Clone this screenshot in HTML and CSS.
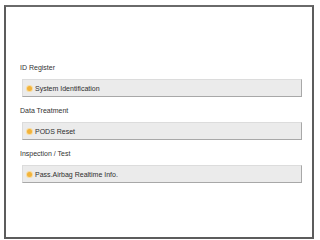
FILE: index.html
```html
<!DOCTYPE html>
<html>
<head>
<meta charset="utf-8">
<link rel="stylesheet" href="styles.css">
</head>
<body>
<div class="frame">
  <div class="group">
    <div class="label">ID Register</div>
    <div class="btn"><span class="dot"></span><span class="btn-text">System Identification</span></div>
  </div>
  <div class="group">
    <div class="label">Data Treatment</div>
    <div class="btn"><span class="dot"></span><span class="btn-text">PODS Reset</span></div>
  </div>
  <div class="group">
    <div class="label">Inspection / Test</div>
    <div class="btn"><span class="dot"></span><span class="btn-text">Pass.Airbag Realtime Info.</span></div>
  </div>
</div>
</body>
</html>
```

FILE: styles.css
```css
html, body {
  margin: 0;
  padding: 0;
  background: #ffffff;
  width: 317px;
  height: 240px;
  overflow: hidden;
}
body {
  font-family: "Liberation Sans", Arial, sans-serif;
  font-size: 7px;
  color: #333333;
}
.frame {
  box-sizing: border-box;
  margin: 5px 0 0 4px;
  width: 310px;
  height: 234px;
  border: 2px solid #5c5c5c;
  border-top-color: #6a6a6a;
  padding: 55px 10px 0 14px;
  display: flex;
  flex-direction: column;
  gap: 8px;
}
.group {
  display: flex;
  flex-direction: column;
  gap: 5px;
}
.label {
  height: 12px;
  line-height: 12px;
}
.btn {
  box-sizing: border-box;
  margin-left: 2px;
  height: 18px;
  background: #ebebeb;
  border: 1px solid #dcdcdc;
  border-right-color: #a8a8a8;
  border-bottom-color: #a8a8a8;
  display: flex;
  align-items: center;
  padding-left: 4px;
  gap: 2px;
}
.dot {
  width: 5px;
  height: 5px;
  border-radius: 50%;
  background: #f2b33a;
  box-shadow: 0 0 0 1px #f8dca0;
}
.btn-text {
  color: #2e2e2e;
  margin-left: 1px;
}
```
